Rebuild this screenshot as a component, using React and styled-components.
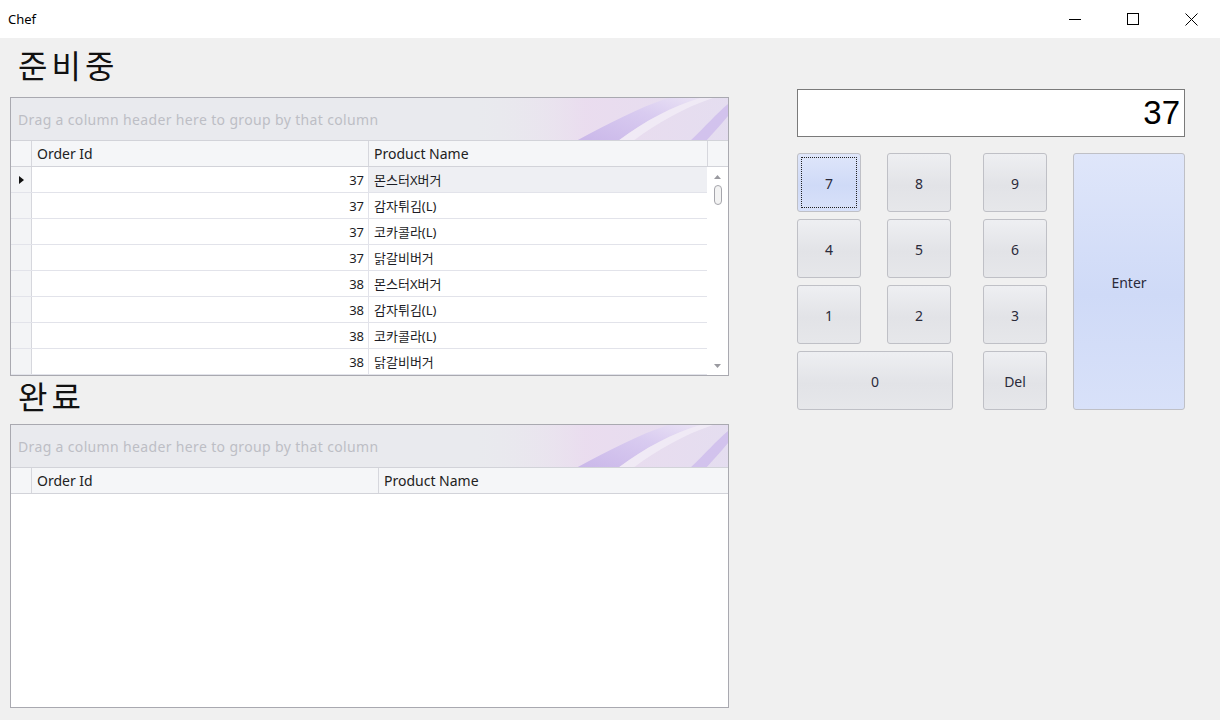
import React from 'react'
import styled, { createGlobalStyle } from 'styled-components'

const GlobalStyle = createGlobalStyle`
  html, body {
    margin: 0;
    padding: 0;
  }

  body {
    background: #f0f0f0;
    font-family: 'Noto Sans', 'Noto Sans CJK KR', sans-serif;
  }
`

const Window = styled.div`
  width: 1220px;
  height: 720px;
  display: flex;
  flex-direction: column;
  overflow: hidden;
  background: #f0f0f0;
`

const TitleBar = styled.div`
  height: 38px;
  flex: none;
  display: flex;
  align-items: center;
  background: #fff;
  padding-left: 8px;
  font-size: 13px;
  color: #000;
`

const Caption = styled.span`
  flex: 1;
`

const WinButton = styled.div`
  width: 58px;
  height: 38px;
  display: flex;
  align-items: center;
  justify-content: center;
`

const Content = styled.div`
  flex: 1;
  display: flex;
  padding-left: 10px;
`

const LeftPane = styled.div`
  width: 719px;
  display: flex;
  flex-direction: column;
`

const Heading = styled.div`
  height: ${({ h }) => h}px;
  display: flex;
  align-items: center;
  padding: 0 0 ${({ pb }) => pb || 0}px 8px;
  box-sizing: border-box;
  font-family: 'Noto Sans CJK KR', sans-serif;
  font-size: 32px;
  letter-spacing: 4px;
  color: #111;
`

const GridBox = styled.div`
  height: ${({ h }) => h}px;
  box-sizing: border-box;
  border: 1px solid #a9a9b0;
  background: #fff;
  display: flex;
  flex-direction: column;
  overflow: hidden;
`

const GroupPanel = styled.div`
  position: relative;
  height: 43px;
  flex: none;
  box-sizing: border-box;
  background: #e9eaee;
  border-bottom: 1px solid #d2d3d9;
  display: flex;
  align-items: center;
  padding-left: 7px;
  font-size: 14px;
  letter-spacing: 0.35px;
  color: #bdbec5;
  overflow: hidden;
`

const GroupText = styled.span`
  position: relative;
  z-index: 1;
`

const Swoosh = styled.svg`
  position: absolute;
  right: 0;
  top: 0;
`

const HeaderRow = styled.div`
  height: 26px;
  flex: none;
  box-sizing: border-box;
  display: grid;
  grid-template-columns: ${({ cols }) => cols};
  background: #f5f6f8;
  border-bottom: 1px solid #d2d3d9;
`

const HeaderCell = styled.div`
  box-sizing: border-box;
  border-right: ${({ last }) => (last ? 'none' : '1px solid #d6d7dd')};
  padding-left: 5px;
  display: flex;
  align-items: center;
  font-size: 14px;
  color: #222;
`

const Body = styled.div`
  flex: 1;
  display: flex;
  overflow: hidden;
`

const Rows = styled.div`
  flex: 1;
  overflow: hidden;
`

const DataRow = styled.div`
  height: 26px;
  box-sizing: border-box;
  display: grid;
  grid-template-columns: ${({ cols }) => cols};
  border-bottom: 1px solid #e2e3ea;
`

const Indicator = styled.div`
  box-sizing: border-box;
  background: #f3f4f6;
  border-right: 1px solid #d6d7dd;
  display: flex;
  align-items: center;
  padding-left: 8px;
`

const Cell = styled.div`
  box-sizing: border-box;
  border-right: ${({ last }) => (last ? 'none' : '1px solid #e2e3ea')};
  background: ${({ focused }) => (focused ? '#eeeff3' : '#fff')};
  display: flex;
  align-items: center;
  justify-content: ${({ right }) => (right ? 'flex-end' : 'flex-start')};
  padding: 0 4px 0 5px;
  font-size: 13px;
  color: #1c1c24;
`

const ScrollBar = styled.div`
  width: 21px;
  flex: none;
  background: #fff;
  display: flex;
  flex-direction: column;
  align-items: center;
  padding-top: 8px;
  box-sizing: border-box;
`

const Thumb = styled.div`
  width: 8px;
  height: 20px;
  margin-top: 6px;
  box-sizing: border-box;
  border: 1px solid #a6a6ac;
  border-radius: 4px;
  background: #f3f3f3;
`

const Spacer = styled.div`
  flex: 1;
`

const RightPane = styled.div`
  margin-left: 68px;
  padding-top: 51px;
  width: 388px;
  display: flex;
  flex-direction: column;
`

const Display = styled.div`
  height: 48px;
  box-sizing: border-box;
  border: 1px solid #7a7a7a;
  background: #fff;
  display: flex;
  align-items: center;
  justify-content: flex-end;
  padding-right: 4px;
  font-family: 'Liberation Sans', Arial, sans-serif;
  font-size: 33px;
  color: #000;
`

const Keypad = styled.div`
  margin-top: 16px;
  display: grid;
  grid-template-columns: 64px 26px 66px 30px 64px 26px 112px;
  grid-template-rows: repeat(4, 59px);
  row-gap: 7px;
`

const Key = styled.button`
  grid-column: ${({ col }) => col};
  grid-row: ${({ row }) => row};
  width: ${({ w }) => w || 'auto'};
  position: relative;
  margin: 0;
  box-sizing: border-box;
  border: 1px solid #bfc0c6;
  border-radius: 3px;
  background: ${({ tone }) =>
    tone === 'blue'
      ? 'linear-gradient(#dfe6fa, #cfdaf7 55%, #d8e1f9)'
      : 'linear-gradient(#eeeff2, #e2e3e7 55%, #e6e7ea)'};
  font-family: 'Noto Sans', sans-serif;
  font-size: 14px;
  color: #2a2a3a;
  display: flex;
  align-items: ${({ top }) => (top ? 'flex-start' : 'center')};
  justify-content: center;
  padding: ${({ top }) => (top ? '119px 0 0' : '2px 0 0')};
`

const FocusRing = styled.span`
  position: absolute;
  inset: 3px;
  border: 1px dotted #222;
  border-radius: 1px;
`

const cols1 = '21px 337px 339px 20px'
const cols2 = '21px 347px 1fr'

const orders = [
  [37, '몬스터X버거'],
  [37, '감자튀김(L)'],
  [37, '코카콜라(L)'],
  [37, '닭갈비버거'],
  [38, '몬스터X버거'],
  [38, '감자튀김(L)'],
  [38, '코카콜라(L)'],
  [38, '닭갈비버거']
]

const SwooshArt = () => (
  <Swoosh width='260' height='43' viewBox='0 0 260 43'>
    <defs>
      <linearGradient id='wash' x1='0' y1='0' x2='1' y2='0'>
        <stop offset='0' stopColor='#e9eaee' stopOpacity='0' />
        <stop offset='0.45' stopColor='#ead9ef' stopOpacity='0.8' />
        <stop offset='1' stopColor='#e4dcf0' stopOpacity='0.9' />
      </linearGradient>
      <linearGradient id='band' x1='0' y1='1' x2='1' y2='0'>
        <stop offset='0' stopColor='#c4b0e8' />
        <stop offset='0.6' stopColor='#d6c8f0' />
        <stop offset='1' stopColor='#ebe4f6' />
      </linearGradient>
    </defs>
    <rect x='0' y='0' width='260' height='43' fill='url(#wash)' />
    <path d='M108,43 C140,26 170,10 200,0 L232,0 C205,8 175,24 150,43 Z' fill='url(#band)' opacity='0.85' />
    <path d='M150,43 C175,24 205,8 232,0 L245,0 C215,10 188,26 165,43 Z' fill='#f3f0f8' opacity='0.7' />
    <path d='M222,43 C236,30 248,16 260,6 L260,18 C252,28 244,36 238,43 Z' fill='#cdbcec' opacity='0.8' />
  </Swoosh>
)

const Grid = ({ cols, height, data, scroll }) => (
  <GridBox h={height}>
    <GroupPanel>
      <GroupText>Drag a column header here to group by that column</GroupText>
      <SwooshArt />
    </GroupPanel>
    <HeaderRow cols={cols}>
      <HeaderCell />
      <HeaderCell>Order Id</HeaderCell>
      <HeaderCell last={!scroll}>Product Name</HeaderCell>
      {scroll && <HeaderCell last />}
    </HeaderRow>
    <Body>
      <Rows>
        {data.map(([id, name], i) => (
          <DataRow key={i} cols={scroll ? '21px 337px 1fr' : cols}>
            <Indicator>
              {i === 0 && (
                <svg width='5' height='8' viewBox='0 0 5 8'>
                  <path d='M0,0 L5,4 L0,8 Z' fill='#111' />
                </svg>
              )}
            </Indicator>
            <Cell right>{id}</Cell>
            <Cell last focused={i === 0}>{name}</Cell>
          </DataRow>
        ))}
      </Rows>
      {scroll && (
        <ScrollBar>
          <svg width='7' height='4' viewBox='0 0 7 4'>
            <path d='M0,4 L3.5,0 L7,4 Z' fill='#9a9aa0' />
          </svg>
          <Thumb />
          <Spacer />
          <svg width='7' height='4' viewBox='0 0 7 4' style={{ marginBottom: 7 }}>
            <path d='M0,0 L3.5,4 L7,0 Z' fill='#9a9aa0' />
          </svg>
        </ScrollBar>
      )}
    </Body>
  </GridBox>
)

const App = () => (
  <Window>
    <GlobalStyle />
    <TitleBar>
      <Caption>Chef</Caption>
      <WinButton>
        <svg width='12' height='12' viewBox='0 0 12 12'>
          <path d='M0,6.5 H12' stroke='#000' strokeWidth='1' />
        </svg>
      </WinButton>
      <WinButton>
        <svg width='12' height='12' viewBox='0 0 12 12'>
          <rect x='0.5' y='0.5' width='11' height='11' fill='none' stroke='#000' strokeWidth='1' />
        </svg>
      </WinButton>
      <WinButton>
        <svg width='13' height='13' viewBox='0 0 13 13'>
          <path d='M0.5,0.5 L12.5,12.5 M12.5,0.5 L0.5,12.5' stroke='#000' strokeWidth='1' />
        </svg>
      </WinButton>
    </TitleBar>
    <Content>
      <LeftPane>
        <Heading h={59} pb={8}>준비중</Heading>
        <Grid cols={cols1} height={279} data={orders} scroll />
        <Heading h={48} pb={11}>완료</Heading>
        <Grid cols={cols2} height={284} data={[]} />
      </LeftPane>
      <RightPane>
        <Display>37</Display>
        <Keypad>
          <Key col='1' row='1' tone='blue'>7<FocusRing /></Key>
          <Key col='3' row='1' w='64px'>8</Key>
          <Key col='5' row='1'>9</Key>
          <Key col='1' row='2'>4</Key>
          <Key col='3' row='2' w='64px'>5</Key>
          <Key col='5' row='2'>6</Key>
          <Key col='1' row='3'>1</Key>
          <Key col='3' row='3' w='64px'>2</Key>
          <Key col='5' row='3'>3</Key>
          <Key col='1 / 4' row='4'>0</Key>
          <Key col='5' row='4'>Del</Key>
          <Key col='7' row='1 / 5' tone='blue' top>Enter</Key>
        </Keypad>
      </RightPane>
    </Content>
  </Window>
)

export default App
